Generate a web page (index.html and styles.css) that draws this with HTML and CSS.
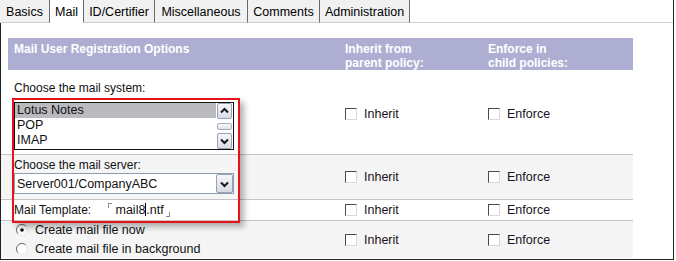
FILE: index.html
```html
<!DOCTYPE html>
<html lang="en">
<head>
    <meta charset="UTF-8">
    <title>Mail User Registration Options</title>
    <link rel="stylesheet" href="styles.css">
</head>
<body>
    <div class="window">
        <!-- tab strip -->
        <div class="tabs">
            <span class="tab">Basics</span>
            <span class="tab active">Mail</span>
            <span class="tab">ID/Certifier</span>
            <span class="tab">Miscellaneous</span>
            <span class="tab">Comments</span>
            <span class="tab">Administration</span>
            <span class="tab-fill"></span>
        </div>

        <div class="panel">
            <div class="head">
                <div class="col-main">Mail User Registration Options</div>
                <div>Inherit from<br>parent policy:</div>
                <div>Enforce in<br>child policies:</div>
            </div>

            <!-- mail system -->
            <div class="row row-system">
                <div class="col-main">
                    <div class="label">Choose the mail system:</div>
                    <div class="listbox">
                        <div class="items">
                            <div class="item selected">Lotus Notes</div>
                            <div class="item">POP</div>
                            <div class="item">IMAP</div>
                        </div>
                        <div class="vscroll">
                            <span class="sbtn">
                                <svg width="15" height="16" viewBox="0 0 15 16"><polyline points="4,9.5 7.5,6 11,9.5" fill="none" stroke="#1a1a1a" stroke-width="2"/></svg>
                            </span>
                            <span class="thumb"></span>
                            <span class="sbtn">
                                <svg width="15" height="16" viewBox="0 0 15 16"><polyline points="4,6.5 7.5,10 11,6.5" fill="none" stroke="#1a1a1a" stroke-width="2"/></svg>
                            </span>
                        </div>
                    </div>
                </div>
                <div class="check"><span class="box"></span>Inherit</div>
                <div class="check"><span class="box"></span>Enforce</div>
            </div>

            <!-- mail server -->
            <div class="row row-server alt">
                <div class="col-main">
                    <div class="label">Choose the mail server:</div>
                    <div class="select">
                        <span class="value">Server001/CompanyABC</span>
                        <span class="drop">
                            <svg width="15" height="18" viewBox="0 0 15 18"><polyline points="4,7.5 7.5,11 11,7.5" fill="none" stroke="#1a1a1a" stroke-width="2"/></svg>
                        </span>
                    </div>
                </div>
                <div class="check"><span class="box"></span>Inherit</div>
                <div class="check"><span class="box"></span>Enforce</div>
            </div>

            <!-- template -->
            <div class="row row-template">
                <div class="col-main">
                    Mail Template:
                    <span class="field"><span class="mark mark-tl"></span>mail8<span class="caret"></span>.ntf<span class="mark mark-br"></span></span>
                </div>
                <div class="check"><span class="box"></span>Inherit</div>
                <div class="check"><span class="box"></span>Enforce</div>
            </div>

            <!-- mail file creation -->
            <div class="row row-create alt">
                <div class="col-main">
                    <div class="radio">
                        <svg width="12" height="12" viewBox="0 0 12 12"><circle cx="6" cy="6" r="5.5" fill="#fff"/><path d="M2.1 9.9A5.5 5.5 0 0 1 9.9 2.1" fill="none" stroke="#6a6a6a"/><path d="M9.9 2.1A5.5 5.5 0 0 1 2.1 9.9" fill="none" stroke="#e2e2e2"/><circle cx="6" cy="6" r="1.8" fill="#111"/></svg>
                        Create mail file now
                    </div>
                    <div class="radio">
                        <svg width="12" height="12" viewBox="0 0 12 12"><circle cx="6" cy="6" r="5.5" fill="#fff"/><path d="M2.1 9.9A5.5 5.5 0 0 1 9.9 2.1" fill="none" stroke="#6a6a6a"/><path d="M9.9 2.1A5.5 5.5 0 0 1 2.1 9.9" fill="none" stroke="#e2e2e2"/></svg>
                        Create mail file in background
                    </div>
                </div>
                <div class="check"><span class="box"></span>Inherit</div>
                <div class="check"><span class="box"></span>Enforce</div>
            </div>

            <!-- red highlight drawn over the first three fields -->
            <div class="callout"></div>
        </div>
    </div>
</body>
</html>
```

FILE: styles.css
```css
* {
    margin: 0;
    padding: 0;
    box-sizing: border-box;
}

body {
    font-family: 'Liberation Sans', Arial, sans-serif;
    font-size: 12px;
    color: #111;
    background: #fff;
}

.window {
    width: 674px;
    border-right: 1px solid #222;
}

/* tabs */
.tabs {
    display: flex;
    height: 23px;
}

.tab {
    height: 23px;
    line-height: 22px;
    padding-top: 1px;
    text-align: center;
    font-size: 12.5px;
    background-color: #f1f1f1;
    border-right: 1px solid #6a6a6a;
    border-bottom: 1px solid #cfcfcf;
    color: #000;
}

.tab:nth-child(1) { width: 50px; }
.tab:nth-child(2) { width: 34px; }
.tab:nth-child(3) { width: 71px; }
.tab:nth-child(4) { width: 93px; }
.tab:nth-child(5) { width: 72px; }
.tab:nth-child(6) { width: 90px; }

.tab.active {
    background-color: #fff;
    border-bottom-color: #fff;
}

.tab-fill {
    flex: 1;
    border-bottom: 1px solid #cfcfcf;
}

/* panel */
.panel {
    position: relative;
    height: 237px;
    padding-top: 15px;
    border-left: 1px solid #222;
    border-bottom: 1px solid #222;
}

.head,
.row {
    display: grid;
    grid-template-columns: 344px 143px 1fr;
    width: 632px;
}

.head {
    grid-template-columns: 337px 143px 1fr;
    width: 625px;
    margin-left: 7px;
    height: 32px;
    padding-top: 4px;
    background-color: #aeaed2;
    color: #fff;
    font-weight: bold;
    line-height: 14px;
}

.head .col-main {
    padding-left: 6px;
}

.row {
    border-bottom: 1px solid #c4c4c4;
    align-items: center;
}

.row.alt {
    background-color: #f5f5f5;
}

.row .col-main {
    padding-left: 13px;
    align-self: stretch;
}

.label {
    line-height: 14px;
}

/* list box */
.row-system .col-main {
    padding-top: 11px;
    padding-bottom: 4px;
}

.row-system .label {
    margin-bottom: 7px;
}

.row-system .check {
    margin-top: 4px;
}

.listbox {
    display: flex;
    width: 220px;
    height: 48px;
    border: 1px solid #111;
    background-color: #fff;
}

.items {
    flex: 1;
}

.item {
    height: 15px;
    line-height: 15px;
    padding-left: 2px;
    font-size: 12.5px;
}

.item.selected {
    background-color: #bababf;
}

.vscroll {
    width: 17px;
    display: flex;
    flex-direction: column;
    align-items: center;
    justify-content: space-between;
    padding: 0 1px;
}

.sbtn {
    display: block;
    width: 15px;
    height: 16px;
    border: 1px solid #9aa1b3;
    border-radius: 2px;
    background: linear-gradient(#f6f7fa, #d9dde7);
}

.sbtn svg {
    display: block;
    margin: -1px 0 0 -1px;
}

.thumb {
    display: block;
    width: 15px;
    height: 7px;
    border: 1px solid #a9aebb;
    border-radius: 2px;
    background: linear-gradient(#f7f8fb, #dfe2ea);
}

/* select */
.row-server .col-main {
    padding-top: 3px;
    padding-bottom: 5px;
}

.select {
    display: flex;
    align-items: center;
    width: 220px;
    height: 21px;
    margin-top: 1px;
    border: 1px solid #8d9bb0;
    background-color: #fff;
}

.select .value {
    flex: 1;
    padding-left: 2px;
    font-size: 12.5px;
}

.drop {
    width: 17px;
    height: 19px;
    border: 1px solid #9aa1b3;
    border-radius: 2px;
    background: linear-gradient(#f6f7fa, #d6dae5);
}

.drop svg {
    display: block;
}

/* template */
.row-template {
    height: 21px;
}

.row-template .col-main {
    padding-top: 1px;
    line-height: 19px;
}

.field {
    margin-left: 14px;
    font-size: 12.5px;
}

.mark {
    display: inline-block;
    width: 4px;
    height: 5px;
    border-color: #8a8a8a;
    border-style: solid;
    border-width: 0;
}

.mark-tl {
    border-top-width: 1px;
    border-left-width: 1px;
    vertical-align: 6px;
    margin-right: 3px;
}

.mark-br {
    border-bottom-width: 1px;
    border-right-width: 1px;
    vertical-align: -3px;
    margin-left: 2px;
}

.caret {
    display: inline-block;
    width: 1px;
    height: 13px;
    background-color: #000;
    vertical-align: -2px;
}

/* radios */
.row-create {
    height: 37px;
    border-bottom: none;
}

.row-create .col-main {
    display: flex;
    flex-direction: column;
    gap: 2px;
}

.radio {
    display: flex;
    align-items: center;
    gap: 7px;
    height: 17px;
    padding-left: 2px;
    font-size: 12.5px;
}

/* checkboxes */
.check {
    display: flex;
    align-items: center;
    gap: 7px;
    font-size: 12.5px;
    color: #1a1020;
}

.box {
    display: inline-block;
    width: 12px;
    height: 12px;
    background-color: #fff;
    border: 1px solid;
    border-color: #4a4a4a #d8d8d8 #d8d8d8 #4a4a4a;
}

/* annotation */
.callout {
    position: absolute;
    left: 11px;
    top: 75px;
    width: 228px;
    height: 125px;
    border: 2px solid #e8121c;
    box-shadow: 4px 4px 6px rgba(0, 0, 0, 0.3);
}
```
